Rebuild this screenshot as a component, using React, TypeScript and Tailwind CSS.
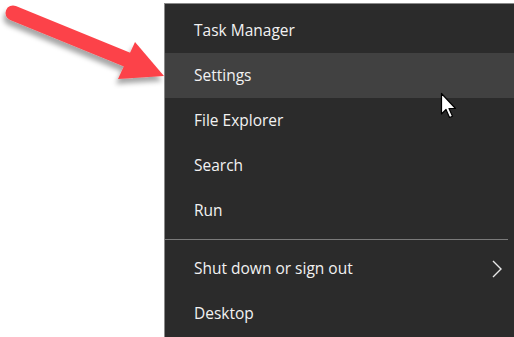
import React from "react";

const Item = ({ label, active, chevron }: { label: string; active?: boolean; chevron?: boolean }) => (
  <div
    className={`h-[45px] flex items-center pl-[29px] pr-[10px] text-[15.5px] text-[#f2f2f2] ${active ? "bg-[#414141]" : ""}`}
  >
    <span className="flex-1">{label}</span>
    {chevron && (
      <svg width="12" height="20" viewBox="0 0 12 20" className="mr-[1px]">
        <polyline points="2,2 10,10 2,18" fill="none" stroke="#e8e8e8" strokeWidth="1.4" />
      </svg>
    )}
  </div>
);

export default function App() {
  return (
    <div
      className="relative w-[514px] h-[337px] bg-white overflow-hidden flex"
      style={{ fontFamily: '"Open Sans", "Noto Sans", sans-serif' }}
    >
      <div className="ml-[164px] mt-[3px] flex-1 bg-[#2b2b2b] border-l border-t border-[#8a8a8a] pt-[4px] flex flex-col">
        <Item label="Task Manager" />
        <Item label="Settings" active />
        <Item label="File Explorer" />
        <Item label="Search" />
        <Item label="Run" />
        <div className="my-[6px] h-px bg-[#7a7a7a] mr-[6px]" />
        <Item label="Shut down or sign out" chevron />
        <Item label="Desktop" />
      </div>

      <svg
        className="absolute left-0 top-0"
        width="180"
        height="100"
        viewBox="0 0 180 100"
      >
        <defs>
          <filter id="sh" x="-20%" y="-20%" width="140%" height="160%">
            <feDropShadow dx="-2" dy="5" stdDeviation="2.5" floodColor="#000" floodOpacity="0.35" />
          </filter>
        </defs>
        <g filter="url(#sh)" fill="#fc4349">
          <line x1="13" y1="13" x2="128" y2="60" stroke="#fc4349" strokeWidth="15" strokeLinecap="round" />
          <polygon points="135,42 118,79 164,76" />
        </g>
      </svg>

      <svg className="absolute left-[440px] top-[92px]" width="20" height="30" viewBox="0 0 20 30">
        <path
          d="M1.5 1.5 L1.5 22 L6 17.5 L9.5 25.5 L12.5 24.2 L9 16.5 L15.5 16.5 Z"
          fill="#ffffff"
          stroke="#000"
          strokeWidth="1.2"
          strokeLinejoin="round"
        />
      </svg>
    </div>
  );
}
